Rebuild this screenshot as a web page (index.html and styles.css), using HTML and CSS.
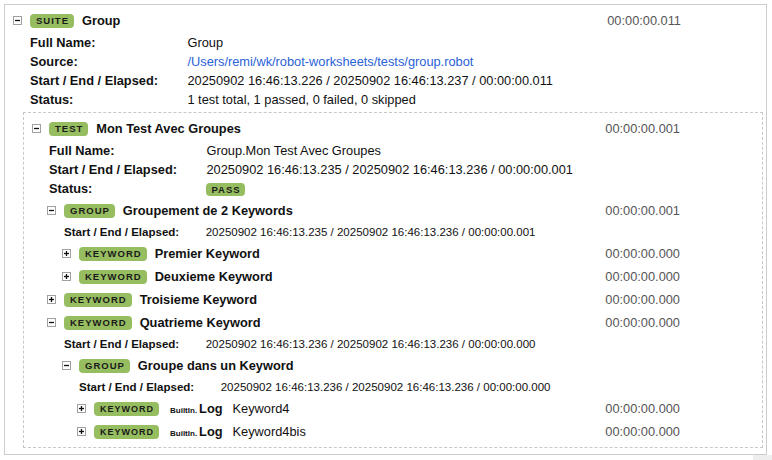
FILE: index.html
```html
<!DOCTYPE html>
<html lang="fr">
<head>
<meta charset="utf-8">
<title>Group</title>
<link rel="stylesheet" href="styles.css">
</head>
<body>
<div class="log">
  <div class="head">
    <svg class="toggle" viewBox="0 0 9 9"><rect x="0.5" y="0.5" width="8" height="8" fill="#fff" stroke="#a0a0a0"/><line x1="2" y1="4.5" x2="7" y2="4.5" stroke="#111" stroke-width="1.3"/></svg>
    <span class="badge">Suite</span>
    <span class="name">Group</span>
    <span class="elapsed">00:00:00.011</span>
  </div>
  <dl class="meta">
    <dt>Full Name:</dt><dd>Group</dd>
    <dt>Source:</dt><dd><a class="link" href="#">/Users/remi/wk/robot-worksheets/tests/group.robot</a></dd>
    <dt>Start / End / Elapsed:</dt><dd>20250902 16:46:13.226 / 20250902 16:46:13.237 / 00:00:00.011</dd>
    <dt>Status:</dt><dd>1 test total, 1 passed, 0 failed, 0 skipped</dd>
  </dl>

  <div class="test-box">
    <div class="head">
      <svg class="toggle" viewBox="0 0 9 9"><rect x="0.5" y="0.5" width="8" height="8" fill="#fff" stroke="#a0a0a0"/><line x1="2" y1="4.5" x2="7" y2="4.5" stroke="#111" stroke-width="1.3"/></svg>
      <span class="badge">Test</span>
      <span class="name">Mon Test Avec Groupes</span>
      <span class="elapsed">00:00:00.001</span>
    </div>
    <dl class="meta">
      <dt>Full Name:</dt><dd>Group.Mon Test Avec Groupes</dd>
      <dt>Start / End / Elapsed:</dt><dd>20250902 16:46:13.235 / 20250902 16:46:13.236 / 00:00:00.001</dd>
      <dt>Status:</dt><dd><span class="badge status">Pass</span></dd>
    </dl>

    <div class="children">
      <div class="head">
        <svg class="toggle" viewBox="0 0 9 9"><rect x="0.5" y="0.5" width="8" height="8" fill="#fff" stroke="#a0a0a0"/><line x1="2" y1="4.5" x2="7" y2="4.5" stroke="#111" stroke-width="1.3"/></svg>
        <span class="badge">Group</span>
        <span class="name">Groupement de 2 Keywords</span>
        <span class="elapsed">00:00:00.001</span>
      </div>
      <dl class="meta small">
        <dt>Start / End / Elapsed:</dt><dd>20250902 16:46:13.235 / 20250902 16:46:13.236 / 00:00:00.001</dd>
      </dl>
      <div class="children">
        <div class="head">
          <svg class="toggle" viewBox="0 0 9 9"><rect x="0.5" y="0.5" width="8" height="8" fill="#fff" stroke="#a0a0a0"/><line x1="2" y1="4.5" x2="7" y2="4.5" stroke="#111" stroke-width="1.3"/><line x1="4.5" y1="2" x2="4.5" y2="7" stroke="#111" stroke-width="1.3"/></svg>
          <span class="badge">Keyword</span>
          <span class="name">Premier Keyword</span>
          <span class="elapsed">00:00:00.000</span>
        </div>
        <div class="head">
          <svg class="toggle" viewBox="0 0 9 9"><rect x="0.5" y="0.5" width="8" height="8" fill="#fff" stroke="#a0a0a0"/><line x1="2" y1="4.5" x2="7" y2="4.5" stroke="#111" stroke-width="1.3"/><line x1="4.5" y1="2" x2="4.5" y2="7" stroke="#111" stroke-width="1.3"/></svg>
          <span class="badge">Keyword</span>
          <span class="name">Deuxieme Keyword</span>
          <span class="elapsed">00:00:00.000</span>
        </div>
      </div>

      <div class="head">
        <svg class="toggle" viewBox="0 0 9 9"><rect x="0.5" y="0.5" width="8" height="8" fill="#fff" stroke="#a0a0a0"/><line x1="2" y1="4.5" x2="7" y2="4.5" stroke="#111" stroke-width="1.3"/><line x1="4.5" y1="2" x2="4.5" y2="7" stroke="#111" stroke-width="1.3"/></svg>
        <span class="badge">Keyword</span>
        <span class="name">Troisieme Keyword</span>
        <span class="elapsed">00:00:00.000</span>
      </div>

      <div class="head">
        <svg class="toggle" viewBox="0 0 9 9"><rect x="0.5" y="0.5" width="8" height="8" fill="#fff" stroke="#a0a0a0"/><line x1="2" y1="4.5" x2="7" y2="4.5" stroke="#111" stroke-width="1.3"/></svg>
        <span class="badge">Keyword</span>
        <span class="name">Quatrieme Keyword</span>
        <span class="elapsed">00:00:00.000</span>
      </div>
      <dl class="meta small">
        <dt>Start / End / Elapsed:</dt><dd>20250902 16:46:13.236 / 20250902 16:46:13.236 / 00:00:00.000</dd>
      </dl>
      <div class="children">
        <div class="head">
          <svg class="toggle" viewBox="0 0 9 9"><rect x="0.5" y="0.5" width="8" height="8" fill="#fff" stroke="#a0a0a0"/><line x1="2" y1="4.5" x2="7" y2="4.5" stroke="#111" stroke-width="1.3"/></svg>
          <span class="badge">Group</span>
          <span class="name">Groupe dans un Keyword</span>
          <span class="elapsed"></span>
        </div>
        <dl class="meta small">
          <dt>Start / End / Elapsed:</dt><dd>20250902 16:46:13.236 / 20250902 16:46:13.236 / 00:00:00.000</dd>
        </dl>
        <div class="children">
          <div class="head">
            <svg class="toggle" viewBox="0 0 9 9"><rect x="0.5" y="0.5" width="8" height="8" fill="#fff" stroke="#a0a0a0"/><line x1="2" y1="4.5" x2="7" y2="4.5" stroke="#111" stroke-width="1.3"/><line x1="4.5" y1="2" x2="4.5" y2="7" stroke="#111" stroke-width="1.3"/></svg>
            <span class="badge lib">Keyword</span>
            <span class="name kw"><span class="owner">BuiltIn.</span>Log<span class="args">Keyword4</span></span>
            <span class="elapsed">00:00:00.000</span>
          </div>
          <div class="head">
            <svg class="toggle" viewBox="0 0 9 9"><rect x="0.5" y="0.5" width="8" height="8" fill="#fff" stroke="#a0a0a0"/><line x1="2" y1="4.5" x2="7" y2="4.5" stroke="#111" stroke-width="1.3"/><line x1="4.5" y1="2" x2="4.5" y2="7" stroke="#111" stroke-width="1.3"/></svg>
            <span class="badge lib">Keyword</span>
            <span class="name kw"><span class="owner">BuiltIn.</span>Log<span class="args">Keyword4bis</span></span>
            <span class="elapsed">00:00:00.000</span>
          </div>
        </div>
      </div>
    </div>
  </div>
</div>
<div class="corner"></div>
</body>
</html>
```
FILE: styles.css
```css
html, body {
  margin: 0;
  padding: 0;
  background: #fff;
}

body {
  font-family: "Liberation Sans", Arial, Helvetica, sans-serif;
  font-size: 12.8px;
  color: #111;
}

.log {
  margin: 4px 5px 0 4px;
  border: 1px solid #cdcdcd;
  padding: 4px 3px 4px 8px;
}

.head {
  display: flex;
  align-items: center;
  height: 23px;
  white-space: nowrap;
}

.toggle {
  flex: none;
  width: 9px;
  height: 9px;
  margin-right: 8px;
  display: block;
}

.badge {
  display: inline-block;
  flex: none;
  height: 14px;
  line-height: 14px;
  padding: 0 5px 0 6px;
  border-radius: 4px;
  background: #97bd61;
  color: #1a1a1a;
  font-size: 9.5px;
  font-weight: bold;
  letter-spacing: 1px;
  text-transform: uppercase;
}

.badge.lib {
  font-size: 9px;
  padding: 0 5px 0 6px;
}

.badge.status {
  height: 13px;
  line-height: 13px;
  padding: 0 4px 0 5px;
  vertical-align: middle;
}

.name {
  flex: 1;
  margin-left: 8px;
  font-weight: bold;
}

.name.kw {
  margin-left: 11px;
}

.owner {
  font-size: 8px;
  margin-right: 2px;
}

.args {
  font-weight: normal;
  margin-left: 10px;
}

.elapsed {
  margin-right: 82px;
  color: #555;
}

.meta {
  display: grid;
  grid-template-columns: 12.3em 1fr;
  margin: 0;
  padding: 1px 0 1px 17px;
  line-height: 19px;
  white-space: nowrap;
}

.meta.small {
  font-size: 11.52px;
  line-height: 18px;
}

.meta dt {
  font-weight: bold;
}

.meta dd {
  margin: 0;
}

.link {
  color: #2a62d8;
  text-decoration: none;
}

.test-box {
  border: 1px dashed #c8c8c8;
  margin: 2px 0 2px 10px;
  padding: 4px 0 4px 8px;
}

.children {
  padding-left: 15px;
}

.corner {
  position: fixed;
  right: 0;
  bottom: 0;
  width: 19px;
  height: 5px;
  background: #eeeeee;
}
```
